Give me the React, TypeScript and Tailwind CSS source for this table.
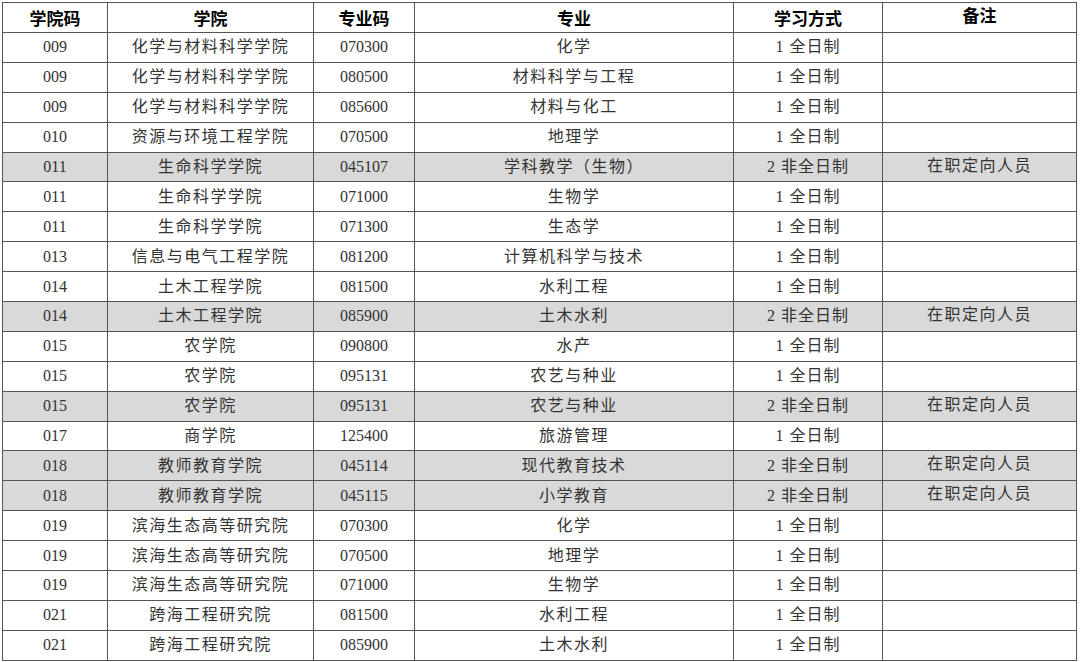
const rows: [string, string, string, string, string, string, boolean][] = [
  ["009", "化学与材料科学学院", "070300", "化学", "1 全日制", "", false],
  ["009", "化学与材料科学学院", "080500", "材料科学与工程", "1 全日制", "", false],
  ["009", "化学与材料科学学院", "085600", "材料与化工", "1 全日制", "", false],
  ["010", "资源与环境工程学院", "070500", "地理学", "1 全日制", "", false],
  ["011", "生命科学学院", "045107", "学科教学（生物）", "2 非全日制", "在职定向人员", true],
  ["011", "生命科学学院", "071000", "生物学", "1 全日制", "", false],
  ["011", "生命科学学院", "071300", "生态学", "1 全日制", "", false],
  ["013", "信息与电气工程学院", "081200", "计算机科学与技术", "1 全日制", "", false],
  ["014", "土木工程学院", "081500", "水利工程", "1 全日制", "", false],
  ["014", "土木工程学院", "085900", "土木水利", "2 非全日制", "在职定向人员", true],
  ["015", "农学院", "090800", "水产", "1 全日制", "", false],
  ["015", "农学院", "095131", "农艺与种业", "1 全日制", "", false],
  ["015", "农学院", "095131", "农艺与种业", "2 非全日制", "在职定向人员", true],
  ["017", "商学院", "125400", "旅游管理", "1 全日制", "", false],
  ["018", "教师教育学院", "045114", "现代教育技术", "2 非全日制", "在职定向人员", true],
  ["018", "教师教育学院", "045115", "小学教育", "2 非全日制", "在职定向人员", true],
  ["019", "滨海生态高等研究院", "070300", "化学", "1 全日制", "", false],
  ["019", "滨海生态高等研究院", "070500", "地理学", "1 全日制", "", false],
  ["019", "滨海生态高等研究院", "071000", "生物学", "1 全日制", "", false],
  ["021", "跨海工程研究院", "081500", "水利工程", "1 全日制", "", false],
  ["021", "跨海工程研究院", "085900", "土木水利", "1 全日制", "", false],
];

const headers = ["学院码", "学院", "专业码", "专业", "学习方式", "备注"];

export default function App() {
  return (
    <div className="w-[1080px] h-[662px] bg-white overflow-hidden pt-[2px] pl-[2px]">
      <table className="border-collapse table-fixed text-[#333]">
        <colgroup>
          <col className="w-[105px]" />
          <col className="w-[206px]" />
          <col className="w-[101px]" />
          <col className="w-[319px]" />
          <col className="w-[149px]" />
          <col className="w-[194px]" />
        </colgroup>
        <thead>
          <tr className="h-[30px]">
            {headers.map((h, i) => (
              <th
                key={h}
                className={`border border-[#555] p-0 text-[17px] font-bold text-black font-['Noto_Sans_CJK_SC',sans-serif] leading-none ${i === 5 ? "align-top pt-[3px]" : "align-middle"}`}
              >
                {h}
              </th>
            ))}
          </tr>
        </thead>
        <tbody>
          {rows.map((r, idx) => (
            <tr key={idx} className={`h-[29.9px] ${r[6] ? "bg-[#d9d9d9]" : "bg-white"}`}>
              {r.slice(0, 6).map((c, i) => (
                <td
                  key={i}
                  className={`border border-[#555] p-0 text-center text-[16px] leading-none font-['Liberation_Serif','Noto_Sans_CJK_SC',serif] ${i === 5 ? "align-top pt-[5px]" : "align-middle"}`}
                >
                  <span className={i === 1 || i === 3 || i === 5 ? "tracking-[1.5px]" : i === 4 ? "tracking-[1px]" : ""}>{c}</span>
                </td>
              ))}
            </tr>
          ))}
        </tbody>
      </table>
    </div>
  );
}
